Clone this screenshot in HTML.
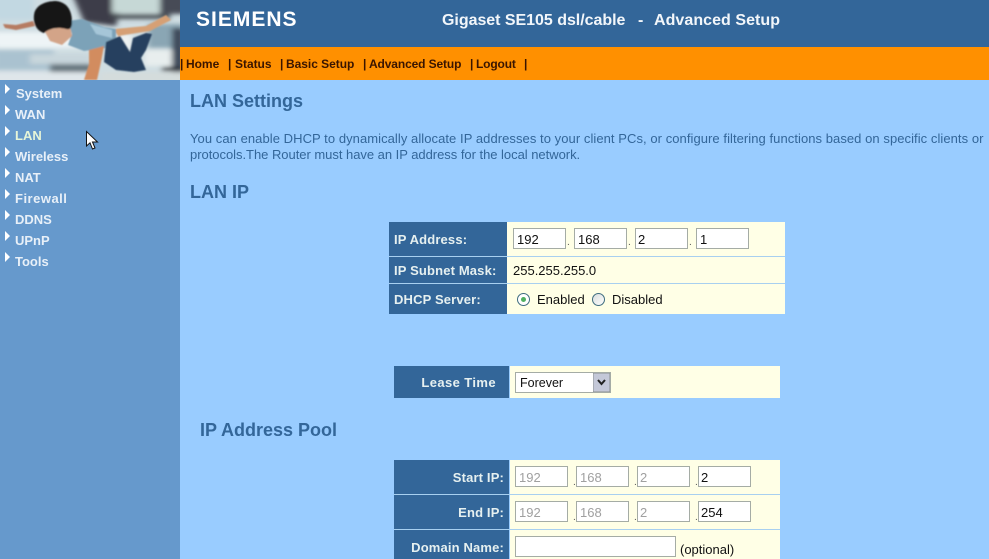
<!DOCTYPE html>
<html><head><meta charset="utf-8"><style>
html,body{margin:0;padding:0;width:989px;height:559px;overflow:hidden;background:#99ccff}
body{position:relative;font-family:"Liberation Sans",Arial,sans-serif;font-size:13px}
.a,.t,.i,.l{position:absolute}
.t{white-space:nowrap;line-height:14px}
.h{color:#336699;font-weight:bold;font-size:18px;line-height:20px}
.n{color:#e8f0f8;font-weight:bold;font-size:13px;line-height:15px}
.m{color:#3a1500;font-weight:bold;font-size:12px;line-height:14px;letter-spacing:-.03px}
.l{background:#336699;color:#e6f0f0;font-weight:bold;font-size:13px;line-height:14px;white-space:nowrap;box-sizing:border-box;letter-spacing:.15px}
.c{position:absolute;background:#ffffe6}
.i{box-sizing:border-box;height:21px;width:53px;background:#fff;border:1px solid #a5aca5;font-size:13px;line-height:21px;color:#111;padding-left:3px}
.g{color:#a0a0a0}
.tr{position:absolute;width:0;height:0;border-left:5px solid #fff;border-top:5px solid transparent;border-bottom:5px solid transparent}
.d{position:absolute;color:#555;font-size:10px;line-height:10px}
</style></head><body>
<div class="a" style="left:0;top:80px;width:180px;height:479px;background:#6699cc"></div>
<div class="a" style="left:180px;top:0;width:809px;height:47px;background:#336699"></div>
<div class="a" style="left:180px;top:47px;width:809px;height:33px;background:#ff9000"></div>

<svg class="a" style="left:0;top:0" width="180" height="80" viewBox="0 0 180 80">
<defs><filter id="f1" x="-30%" y="-60%" width="160%" height="220%"><feGaussianBlur stdDeviation="3 2"/></filter><filter id="f2" x="-10%" y="-10%" width="120%" height="120%"><feGaussianBlur stdDeviation=".8"/></filter></defs>
<rect width="180" height="80" fill="#cfdde2"/>
<g filter="url(#f1)">
<rect x="-6" y="-4" width="40" height="24" fill="#c2d8e2"/>
<rect x="-6" y="32" width="100" height="16" fill="#eef4f6"/>
<rect x="-6" y="50" width="60" height="20" fill="#aac2d0"/>
<rect x="30" y="54" width="60" height="10" fill="#c8d6dc"/>
<rect x="50" y="64" width="42" height="10" fill="#66767e"/>
<rect x="-6" y="72" width="100" height="12" fill="#dfe6ea"/>
<path d="M72 -6H112L120 8 116 26 84 22Z" fill="#3c3e4a"/>
<rect x="112" y="-6" width="48" height="19" fill="#c6d8d6"/>
<rect x="112" y="14" width="58" height="5" fill="#4c5258"/>
<rect x="160" y="-6" width="26" height="20" fill="#474c56"/>
<rect x="148" y="24" width="36" height="24" fill="#8aa6b4"/>
<rect x="172" y="28" width="12" height="44" fill="#3c4a5a"/>
<rect x="144" y="50" width="28" height="16" fill="#e8eeee"/>
<rect x="162" y="67" width="22" height="4" fill="#2e3238"/>
<rect x="100" y="72" width="84" height="12" fill="#d4dcdc"/>
<rect x="118" y="34" width="14" height="18" fill="#eef2f2"/>
</g>
<g filter="url(#f2)">
<path d="M3 24 16 25 33 21 35 26 16 30 5 28Z" fill="#b67c62"/>
<path d="M114 29 146 26 166 15 171 20 150 31 118 36Z" fill="#d6a074"/>
<path d="M68 21 82 19 104 27 116 29 116 38 106 48 84 51 68 45 72 34Z" fill="#7ba2b8"/>
<path d="M90 24 112 30 112 38 96 34Z" fill="#a6c6d8"/>
<path d="M106 42 120 36 130 52 133 38 146 33 152 34 146 50 141 58 146 70 134 72 116 70 104 62Z" fill="#26405e"/>
<path d="M89 50 104 46 101 62 97 80H84L89 64Z" fill="#d28c5e"/>
<path d="M44 30 70 26 72 36 62 45 50 41Z" fill="#d3a488"/>
<path d="M34 15C35 5 46 1 56 1 66 2 72 9 72 22 72 28 70 30 66 29 58 27 50 28 44 33 37 31 33 24 34 15Z" fill="#151314"/>
</g>
</svg>

<div class="t" style="left:196px;top:9px;font-size:21px;line-height:22px;font-weight:bold;color:#fff;letter-spacing:1px">SIEMENS</div>
<div class="t" style="left:442px;top:11px;font-size:16px;line-height:20px;font-weight:bold;color:#f2f6fa;letter-spacing:-.03px">Gigaset SE105 dsl/cable</div>
<div class="t" style="left:638px;top:11px;font-size:16px;line-height:20px;font-weight:bold;color:#f2f6fa">-</div>
<div class="t" style="left:654px;top:11px;font-size:16px;line-height:20px;font-weight:bold;color:#f2f6fa;letter-spacing:.05px">Advanced Setup</div>

<div class="t m" style="left:180px;top:57px">|</div>
<div class="t m" style="left:186px;top:57px">Home</div>
<div class="t m" style="left:228px;top:57px">|</div>
<div class="t m" style="left:235px;top:57px">Status</div>
<div class="t m" style="left:280px;top:57px">|</div>
<div class="t m" style="left:286px;top:57px">Basic Setup</div>
<div class="t m" style="left:363px;top:57px">|</div>
<div class="t m" style="left:369px;top:57px;letter-spacing:-.12px">Advanced Setup</div>
<div class="t m" style="left:470px;top:57px">|</div>
<div class="t m" style="left:476px;top:57px;letter-spacing:-.15px">Logout</div>
<div class="t m" style="left:524px;top:57px">|</div>

<div class="tr" style="left:5px;top:84px"></div><div class="t n" style="left:16px;top:86px">System</div>
<div class="tr" style="left:5px;top:105px"></div><div class="t n" style="left:15px;top:107px">WAN</div>
<div class="tr" style="left:5px;top:126px"></div><div class="t n" style="left:15px;top:128px;color:#e6f5d8">LAN</div>
<div class="tr" style="left:5px;top:147px"></div><div class="t n" style="left:15px;top:149px">Wireless</div>
<div class="tr" style="left:5px;top:168px"></div><div class="t n" style="left:15px;top:170px">NAT</div>
<div class="tr" style="left:5px;top:189px"></div><div class="t n" style="left:15px;top:191px;letter-spacing:.5px">Firewall</div>
<div class="tr" style="left:5px;top:210px"></div><div class="t n" style="left:15px;top:212px">DDNS</div>
<div class="tr" style="left:5px;top:231px"></div><div class="t n" style="left:15px;top:233px">UPnP</div>
<div class="tr" style="left:5px;top:252px"></div><div class="t n" style="left:15px;top:254px">Tools</div>

<svg class="a" style="left:85px;top:130px" width="14" height="22" viewBox="0 0 14 22"><path d="M1.5 1.5V16L5 12.8 7.5 19 10 18 7.5 12H12.5Z" fill="#fff" stroke="#111" stroke-width="1"/></svg>

<div class="t h" style="left:190px;top:91px">LAN Settings</div>
<div class="t" style="left:190px;top:131px;color:#336699;font-size:13px;line-height:16px;letter-spacing:.06px">You can enable DHCP to dynamically allocate IP addresses to your client PCs, or configure filtering functions based on specific clients or</div>
<div class="t" style="left:190px;top:147px;color:#336699;font-size:13px;line-height:16px;letter-spacing:-.03px">protocols.The Router must have an IP address for the local network.</div>
<div class="t h" style="left:190px;top:182px">LAN IP</div>

<div class="a" style="left:389px;top:222px;width:396px;height:92px;background:#ffffe6"></div>
<div class="l" style="left:389px;top:222px;width:118px;height:34px;padding:11px 0 0 5px">IP Address:</div>
<div class="l" style="left:389px;top:257px;width:118px;height:26px;padding:7px 0 0 5px">IP Subnet Mask:</div>
<div class="l" style="left:389px;top:284px;width:118px;height:30px;padding:9px 0 0 5px">DHCP Server:</div>
<div class="a" style="left:389px;top:256px;width:396px;height:1px;background:#a8d0f0"></div>
<div class="a" style="left:389px;top:283px;width:396px;height:1px;background:#a8d0f0"></div>

<div class="i" style="left:513px;top:228px">192</div><div class="d" style="left:567px;top:238px">.</div>
<div class="i" style="left:574px;top:228px">168</div><div class="d" style="left:628px;top:238px">.</div>
<div class="i" style="left:635px;top:228px;padding-left:2px">2</div><div class="d" style="left:689px;top:238px">.</div>
<div class="i" style="left:696px;top:228px">1</div>
<div class="t" style="left:513px;top:264px;color:#111">255.255.255.0</div>

<svg class="a" style="left:516px;top:292px" width="16" height="16"><circle cx="7.5" cy="7.5" r="6" fill="#fff" stroke="#3f6d7f"/><circle cx="7.5" cy="7.5" r="2.5" fill="#4fb060"/></svg>
<div class="t" style="left:537px;top:293px;color:#111">Enabled</div>
<svg class="a" style="left:591px;top:292px" width="16" height="16"><defs><linearGradient id="r" x1="0" y1="0" x2="1" y2="1"><stop offset="0" stop-color="#d8dcdc"/><stop offset="1" stop-color="#fff"/></linearGradient></defs><circle cx="7.5" cy="7.5" r="6" fill="url(#r)" stroke="#3f6d7f"/></svg>
<div class="t" style="left:612px;top:293px;color:#111">Disabled</div>

<div class="c" style="left:510px;top:366px;width:270px;height:32px"></div>
<div class="l" style="left:394px;top:366px;width:115px;height:32px;padding:10px 13px 0 0;text-align:right;letter-spacing:.4px">Lease Time</div>
<div class="i" style="left:515px;top:372px;width:96px;padding-left:4px;font-size:12.5px">Forever</div>
<svg class="a" style="left:593px;top:373px" width="17" height="19"><rect width="17" height="19" fill="#c4c8d8" stroke="#8a8f90"/><path d="M5 7 8.5 11 12 7" fill="none" stroke="#222" stroke-width="2"/></svg>

<div class="t h" style="left:200px;top:420px">IP Address Pool</div>

<div class="c" style="left:510px;top:460px;width:270px;height:99px"></div>
<div class="l" style="left:394px;top:460px;width:115px;height:34px;padding:11px 5px 0 0;text-align:right">Start IP:</div>
<div class="l" style="left:394px;top:495px;width:115px;height:34px;padding:11px 5px 0 0;text-align:right">End IP:</div>
<div class="l" style="left:394px;top:530px;width:115px;height:29px;padding:11px 5px 0 0;text-align:right">Domain Name:</div>
<div class="a" style="left:394px;top:494px;width:386px;height:1px;background:#a8d0f0"></div>
<div class="a" style="left:394px;top:529px;width:386px;height:1px;background:#a8d0f0"></div>

<div class="i g" style="left:515px;top:466px">192</div><div class="d" style="left:573px;top:478px">.</div>
<div class="i g" style="left:576px;top:466px">168</div><div class="d" style="left:634px;top:478px">.</div>
<div class="i g" style="left:637px;top:466px;padding-left:2px">2</div><div class="d" style="left:695px;top:478px">.</div>
<div class="i" style="left:698px;top:466px;padding-left:2px">2</div>
<div class="i g" style="left:515px;top:501px">192</div><div class="d" style="left:573px;top:513px">.</div>
<div class="i g" style="left:576px;top:501px">168</div><div class="d" style="left:634px;top:513px">.</div>
<div class="i g" style="left:637px;top:501px;padding-left:2px">2</div><div class="d" style="left:695px;top:513px">.</div>
<div class="i" style="left:698px;top:501px;padding-left:2px">254</div>
<div class="i" style="left:515px;top:536px;width:161px"></div>
<div class="t" style="left:680px;top:543px;color:#111">(optional)</div>
</body></html>
